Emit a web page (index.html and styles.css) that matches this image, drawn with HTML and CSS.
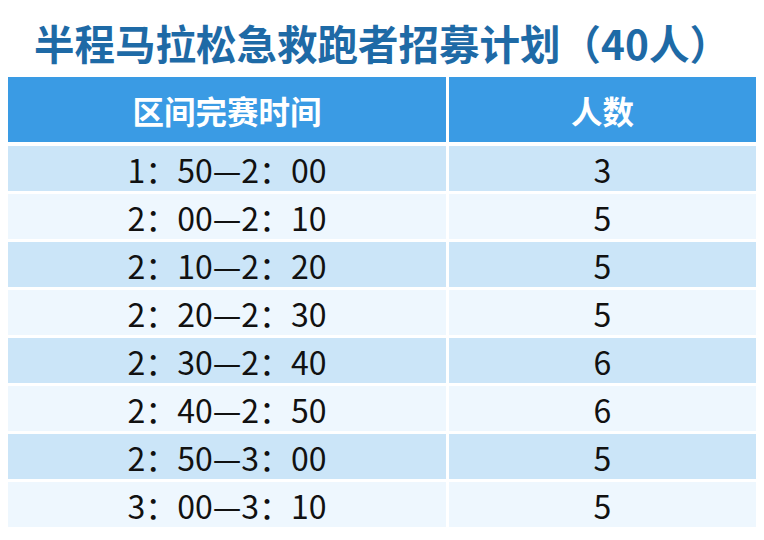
FILE: index.html
```html
<!DOCTYPE html>
<html lang="zh-CN">
<head>
<meta charset="utf-8">
<title>半程马拉松急救跑者招募计划</title>
<link rel="stylesheet" href="styles.css">
</head>
<body>
<div class="page">
  <h1 class="title">半程马拉松急救跑者招募计划（40人）</h1>
  <div class="table">
    <div class="cell head">区间完赛时间</div>
    <div class="cell head">人数</div>
    <div class="cell odd">1：50—2：00</div><div class="cell odd">3</div>
    <div class="cell even">2：00—2：10</div><div class="cell even">5</div>
    <div class="cell odd">2：10—2：20</div><div class="cell odd">5</div>
    <div class="cell even">2：20—2：30</div><div class="cell even">5</div>
    <div class="cell odd">2：30—2：40</div><div class="cell odd">6</div>
    <div class="cell even">2：40—2：50</div><div class="cell even">6</div>
    <div class="cell odd">2：50—3：00</div><div class="cell odd">5</div>
    <div class="cell even">3：00—3：10</div><div class="cell even">5</div>
  </div>
</div>
</body>
</html>
```
FILE: styles.css
```css
html, body {
  margin: 0;
  padding: 0;
  background: #ffffff;
}
.page {
  padding: 0 8px;
  font-family: "Noto Sans CJK SC", "Noto Sans", sans-serif;
}
.title {
  margin: 19px 0 10px;
  height: 48px;
  line-height: 48px;
  font-size: 40.5px;
  font-weight: 700;
  color: #1e6aa6;
  text-align: center;
  white-space: nowrap;
}
.table {
  display: grid;
  grid-template-columns: 438px 307px;
  grid-template-rows: 66px repeat(8, 45px);
  column-gap: 3px;
  row-gap: 3px;
}
.cell {
  display: flex;
  align-items: center;
  justify-content: center;
  font-size: 32px;
  color: #111111;
  white-space: nowrap;
}
.head {
  background: #3a9be4;
  color: #ffffff;
  font-weight: 700;
  font-size: 31.5px;
  margin-bottom: 1px;
}
.odd {
  background: #cbe5f8;
}
.even {
  background: #eef7fe;
}
```
